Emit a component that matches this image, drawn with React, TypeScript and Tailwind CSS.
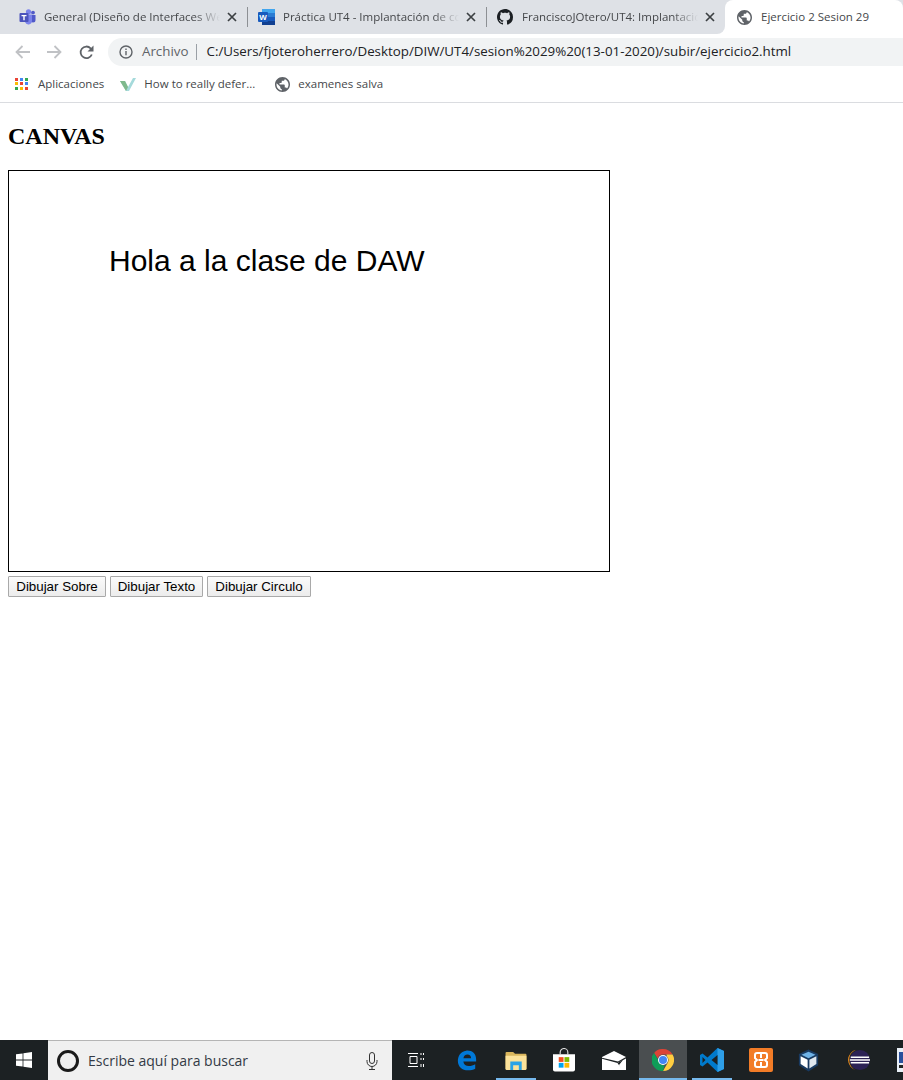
import React from "react";

const ui = "font-['Open_Sans','Noto_Sans',sans-serif]";

function Close() {
  return (
    <svg width="10" height="10" viewBox="0 0 10 10" className="shrink-0">
      <path d="M1 1l8 8M9 1l-8 8" stroke="#3c4043" strokeWidth="1.7" />
    </svg>
  );
}

function Globe({ size = 15 }: { size?: number }) {
  return (
    <svg width={size} height={size} viewBox="2 2 20 20" className="shrink-0" fill="#5f6368">
      <path d="M12 2C6.480 2 2 6.480 2 12s4.480 10 10 10 10-4.480 10-10S17.520 2 12 2zm-1 17.930c-3.950-.490-7-3.850-7-7.930 0-.620.080-1.210.210-1.790L9 15v1c0 1.100.900 2 2 2v1.930zm6.900-2.540c-.260-.810-1-1.390-1.900-1.390h-1v-3c0-.550-.450-1-1-1H8v-2h2c.550 0 1-.450 1-1V7h2c1.100 0 2-.900 2-2v-.410c2.930 1.190 5 4.060 5 7.410 0 2.080-.800 3.970-2.100 5.390z" />
    </svg>
  );
}

function Teams() {
  return (
    <svg width="17" height="16" viewBox="0 0 17 16" className="shrink-0">
      <circle cx="9.5" cy="2.8" r="2.6" fill="#7b83eb" />
      <circle cx="14" cy="3.6" r="1.9" fill="#5059c9" />
      <path d="M11 6h5.500v5a2.500 2.500 0 0 1-5 0z" fill="#5059c9" />
      <path d="M5 5.500h8V12a3.600 3.600 0 0 1-7 1z" fill="#7b83eb" />
      <rect x="0.500" y="4" width="9" height="9" rx="1" fill="#4b53bc" />
      <path d="M2.500 6h5v1.200H5.700v4H4.300v-4H2.500z" fill="#fff" />
    </svg>
  );
}

function Word() {
  return (
    <svg width="17" height="16" viewBox="0 0 17 16" className="shrink-0">
      <rect x="4" y="0" width="13" height="16" rx="1" fill="#2b7cd3" />
      <rect x="4" y="0" width="13" height="4" fill="#41a5ee" />
      <rect x="4" y="8" width="13" height="4" fill="#185abd" />
      <rect x="4" y="12" width="13" height="4" fill="#103f91" />
      <rect x="0" y="3" width="10" height="10" rx="1" fill="#185abd" />
      <text x="5" y="11" fontSize="8" fontWeight="700" fill="#fff" textAnchor="middle" fontFamily="Liberation Sans">W</text>
    </svg>
  );
}

function GitHub() {
  return (
    <svg width="16" height="16" viewBox="0 0 16 16" className="shrink-0" fill="#1b1f23">
      <path d="M8 0C3.580 0 0 3.580 0 8c0 3.540 2.290 6.530 5.470 7.590.400.070.550-.170.550-.380 0-.190-.010-.820-.010-1.490-2.010.370-2.530-.490-2.690-.940-.090-.230-.480-.940-.820-1.130-.280-.150-.680-.520-.010-.530.630-.010 1.080.580 1.230.820.720 1.210 1.870.870 2.330.660.070-.520.280-.870.510-1.070-1.780-.200-3.640-.890-3.640-3.950 0-.870.310-1.590.820-2.150-.080-.200-.360-1.020.080-2.120 0 0 .670-.210 2.200.820.640-.180 1.320-.270 2-.270s1.360.090 2 .270c1.530-1.040 2.200-.820 2.200-.820.440 1.100.160 1.920.080 2.120.510.560.820 1.270.820 2.150 0 3.070-1.870 3.750-3.650 3.950.290.250.540.730.540 1.480 0 1.070-.010 1.930-.010 2.200 0 .210.150.460.550.380A8.010 8.010 0 0 0 16 8c0-4.420-3.580-8-8-8z" />
    </svg>
  );
}

function Tab({ icon, title, divider = true }: { icon: React.ReactNode; title: string; divider?: boolean }) {
  return (
    <div className="flex h-[34px] w-[239px] shrink-0 items-center pl-[19px]">
      <div className="flex w-[25px] shrink-0 items-center">{icon}</div>
      <span className="w-[176px] shrink-0 overflow-hidden whitespace-nowrap text-[11.5px] text-[#45474a] [mask-image:linear-gradient(to_right,#000_150px,transparent_176px)]">
        {title}
      </span>
      <span className="ml-[7px] flex shrink-0"><Close /></span>
      {divider ? <span className="ml-[10px] h-[20px] w-px shrink-0 bg-[#8d9094]" /> : null}
    </div>
  );
}

function Apps() {
  const colors = ["#ea4335", "#4285f4", "#34a853", "#fbbc04", "#ea4335", "#4285f4", "#34a853", "#fbbc04", "#ea4335"];
  return (
    <span className="grid h-[13px] w-[13px] shrink-0 grid-cols-3 gap-[1.5px]">
      {colors.map((c, i) => (
        <span key={i} className="h-[3px] w-[3px]" style={{ background: c }} />
      ))}
    </span>
  );
}

function Cell({ children, active, bar, className = "" }: { children: React.ReactNode; active?: boolean; bar?: boolean; className?: string }) {
  return (
    <div className={`relative flex h-10 w-12 shrink-0 items-center justify-center ${active ? "bg-[#4a4e50]" : ""} ${className}`}>
      {children}
      {bar ? <span className={`absolute bottom-0 h-[2px] bg-[#76b9ed] ${active ? "inset-x-0" : "inset-x-[4px]"}`} /> : null}
    </div>
  );
}

function Taskbar() {
  return (
    <div className="flex h-10 w-[903px] shrink-0 items-stretch overflow-hidden bg-[#1c2123]">
      <div className="flex w-12 shrink-0 items-center justify-center">
        <svg width="16" height="16" viewBox="0 0 16 16" fill="#fff">
          <path d="M0 2.300l6.600-.900v6.200H0zM7.400 1.300L16 0v7.600H7.400zM0 8.400h6.600v6.200L0 13.700zM7.400 8.400H16V16l-8.600-1.300z" />
        </svg>
      </div>
      <div className="flex w-[344px] shrink-0 items-center border-t border-[#b5b5b5] bg-[#f0f0f0] pl-[9px] pr-[14px]">
        <span className="h-[22px] w-[22px] shrink-0 rounded-full border-[3px] border-[#1a1a1a]" />
        <span className="ml-[9px] flex-1 text-[14px] text-[#333a45]">Escribe aquí para buscar</span>
        <svg width="12" height="18" viewBox="0 0 12 18" fill="none" stroke="#333" strokeWidth="1">
          <rect x="3.500" y="0.500" width="5" height="11" rx="2.500" />
          <path d="M1 8v1.500a5 5 0 0 0 10 0V8M6 14.500v3M3 17.500h6" />
        </svg>
      </div>
      <Cell>
        <svg width="16" height="16" viewBox="0 0 16 16" fill="none" stroke="#fff" strokeWidth="1">
          <path d="M0 1.500h10M0 14.500h10M2 4.500h7v7H2zM13 1v2M13 6v2M13 12v3M15.500 1v2M15.500 6v2M15.500 12v3" />
        </svg>
      </Cell>
      <Cell className="ml-[3px]">
        <svg width="20" height="21" viewBox="0 0 21 23">
          <path d="M20.500 12.500H6.500c.300 3.200 2.800 5 6 5 2.600 0 5-.700 7-2v5c-2.200 1.200-4.800 1.800-7.800 1.800C5 22.300.500 18 .500 12 .500 6.500 3.500 1.500 9.500.700c6-.700 11 2.800 11 9.300zM15 9c0-2.500-1.500-4.200-4-4.200S6.900 6.600 6.600 9z" fill="#0078d7" fillRule="evenodd" />
        </svg>
      </Cell>
      <Cell bar className="ml-[1px]">
        <svg width="22" height="19" viewBox="0 0 22 20">
          <path d="M0 2a1 1 0 0 1 1-1h7l2 2h11a1 1 0 0 1 1 1v15H0z" fill="#d9b65c" />
          <path d="M0 5h22v14a1 1 0 0 1-1 1H1a1 1 0 0 1-1-1z" fill="#fbe29a" />
          <path d="M5 11h12v9h-3v-5H8v5H5z" fill="#2aa3e6" />
        </svg>
      </Cell>
      <Cell>
        <svg width="22" height="24" viewBox="0 0 23 24">
          <path d="M7.500 6V4a4 4 0 0 1 8 0v2" fill="none" stroke="#ddd" strokeWidth="1.200" />
          <path d="M0 6h23v16a2 2 0 0 1-2 2H2a2 2 0 0 1-2-2z" fill="#fff" />
          <rect x="6" y="9" width="5" height="5" fill="#f25022" />
          <rect x="12" y="9" width="5" height="5" fill="#7fba00" />
          <rect x="6" y="15" width="5" height="5" fill="#00a4ef" />
          <rect x="12" y="15" width="5" height="5" fill="#ffb900" />
        </svg>
      </Cell>
      <Cell className="ml-[2px]">
        <svg width="24" height="19" viewBox="0 0 24 19">
          <path d="M0 6L12 0l12 6-8 4.500L0 6.800z" fill="#fff" />
          <path d="M0 7.800l15.500 4.300L24 7.500V19H0z" fill="#fff" />
          <path d="M15.500 12.100L21 9l-4 5 2 3z" fill="#1c2123" />
        </svg>
      </Cell>
      <Cell active bar className="ml-[1px]">
        <svg width="22" height="22" viewBox="0 0 22 22">
          <path d="M11 0a11 11 0 0 1 9.530 5.500H11a5.500 5.500 0 0 0-5.300 4L2.100 3.900A11 11 0 0 1 11 0z" fill="#db4437" />
          <path d="M20.530 5.500A11 11 0 0 1 11 22l4.750-8.200A5.500 5.500 0 0 0 15 7.500l-.600-2z" fill="#ffcd40" />
          <path d="M11 22A11 11 0 0 1 2.100 3.900l4.700 8.200A5.500 5.500 0 0 0 12.500 16.300z" fill="#0f9d58" />
          <circle cx="11" cy="11" r="5" fill="#fff" />
          <circle cx="11" cy="11" r="4" fill="#4285f4" />
        </svg>
      </Cell>
      <Cell bar className="ml-[1px]">
        <svg width="24" height="24" viewBox="0 0 24 24">
          <path d="M17.500 0L24 3v18l-6.500 3-10-9.500L2.500 18.500 0 17V7l2.500-1.500 5 4z" fill="#007acc" />
          <path d="M17.500 0L24 3v18l-6.500 3z" fill="#2e9fe8" />
          <path d="M17.500 7l-6 5 6 5zM2.500 9v6l3-3z" fill="#1c2123" />
        </svg>
      </Cell>
      <Cell className="ml-[1px]">
        <svg width="24" height="24" viewBox="0 0 24 24">
          <rect width="24" height="24" rx="2" fill="#f27c27" />
          <path d="M8 5h8a2 2 0 0 1 2 2v3l-2 2 2 2v3a2 2 0 0 1-2 2H8a2 2 0 0 1-2-2v-3l2-2-2-2V7a2 2 0 0 1 2-2zM12 5v5M12 14v5M9.500 12h5" fill="none" stroke="#fff" strokeWidth="2" />
        </svg>
      </Cell>
      <Cell className="-ml-[1px]">
        <svg width="21" height="23" viewBox="0 0 24 25">
          <path d="M12 0l11 5v13l-11 7-11-7V5z" fill="#183a61" />
          <path d="M12 2.500l8 3.500-8 4-8-4z" fill="#6fb2e6" />
          <path d="M3 7.500l8 4v10l-8-5z" fill="#fff" />
          <path d="M21 7.500l-8 4v10l8-5z" fill="#dfe7ee" />
        </svg>
      </Cell>
      <Cell className="ml-[3px]">
        <svg width="24" height="22" viewBox="0 0 24 24">
          <circle cx="13" cy="12" r="11" fill="#2c2255" />
          <path d="M9 0.800A11.500 11.500 0 0 0 9 23.200 12 12 0 0 1 9 0.800z" fill="#f7941e" />
          <path d="M3 9h20M2 12h22M3 15h20" stroke="#fff" strokeWidth="1.500" />
        </svg>
      </Cell>
      <div className="ml-[14px] flex shrink-0 items-center">
        <svg width="16" height="24" viewBox="0 0 16 24">
          <rect width="16" height="24" fill="#e8eef6" />
          <rect x="2" y="4" width="14" height="11" fill="#2a4f9c" />
          <rect x="2" y="17" width="14" height="3" fill="#222" />
        </svg>
      </div>
    </div>
  );
}

export default function App() {
  return (
    <div className="flex h-[1080px] w-[903px] flex-col overflow-hidden bg-white">
      <div className={`flex h-[103px] shrink-0 flex-col border-b border-[#dadce0] ${ui}`}>
        <div className="flex h-[34px] shrink-0 overflow-hidden bg-[#dee1e6]">
          <div className="flex h-[34px] w-[725px] shrink-0 rounded-br-[8px] bg-[#dee1e6] shadow-[8px_8px_0_0_#ffffff]">
            <Tab icon={<Teams />} title="General (Diseño de Interfaces Web)" />
            <Tab icon={<Word />} title="Práctica UT4 - Implantación de contenido" />
            <Tab icon={<GitHub />} title="FranciscoJOtero/UT4: Implantación de" divider={false} />
          </div>
          <div className="flex h-[34px] flex-1 items-center rounded-t-[8px] bg-white pl-[12px]">
            <Globe />
            <span className="ml-[9px] whitespace-nowrap text-[11.5px] text-[#45474a]">Ejercicio 2 Sesion 29</span>
          </div>
        </div>
        <div className="flex h-[34px] shrink-0 items-center bg-white pl-[15px] pt-[2px]">
          <svg width="15" height="14" viewBox="0 0 15 14" fill="none" stroke="#c0c2c5" strokeWidth="1.800">
            <path d="M15 7H2M7.500 1L1.500 7l6 6" />
          </svg>
          <svg width="15" height="14" viewBox="0 0 15 14" fill="none" stroke="#c0c2c5" strokeWidth="1.800" className="ml-[17px]">
            <path d="M0 7H13M7.500 1l6 6-6 6" />
          </svg>
          <svg width="15" height="15" viewBox="0 0 15 15" fill="none" className="ml-[17px]">
            <path d="M12.800 9.500A5.800 5.800 0 1 1 11.600 3.300L13.500 5" stroke="#5f6368" strokeWidth="1.800" />
            <path d="M14.500 0.500V6.500H8.500z" fill="#5f6368" />
          </svg>
          <div className="ml-[14px] flex h-[28px] flex-1 items-center rounded-l-[14px] bg-[#f1f3f4] pl-[11px]">
            <svg width="14" height="14" viewBox="0 0 14 14" fill="none" stroke="#5f6368" strokeWidth="1.400">
              <circle cx="7" cy="7" r="6" />
              <path d="M7 6v4.200M7 3.500v1.500" />
            </svg>
            <span className="ml-[9px] text-[13.33px] text-[#5f6368]">Archivo</span>
            <span className="ml-[8px] h-[16px] w-px bg-[#9aa0a6]" />
            <span className="ml-[9px] whitespace-nowrap text-[13.33px] text-[#202124]">C:/Users/fjoteroherrero/Desktop/DIW/UT4/sesion%2029%20(13-01-2020)/subir/ejercicio2.html</span>
          </div>
        </div>
        <div className="flex h-[34px] shrink-0 items-center bg-white pb-[2px] pl-[15px] text-[11.5px] text-[#45474a]">
          <Apps />
          <span className="ml-[10px]">Aplicaciones</span>
          <svg width="16" height="13" viewBox="0 0 16 13" className="ml-[16px]">
            <path d="M0 3h5l3 6 5-9h3L9 13H6z" fill="#a5dadb" />
            <path d="M0 3h5l3 6-2 4z" fill="#7fb98c" />
          </svg>
          <span className="ml-[8px]">How to really defer...</span>
          <span className="ml-[20px] flex"><Globe /></span>
          <span className="ml-[8px]">examenes salva</span>
        </div>
      </div>

      <main className="flex-1 px-[8px] font-['Liberation_Serif',serif]">
        <h2 className="mt-[20px] text-[24px] font-bold leading-[27px] text-black">CANVAS</h2>
        <div className="mt-[20px] h-[402px] w-[602px] border border-black pl-[100px] pt-[73px] font-['Liberation_Sans',sans-serif]">
          <span className="text-[30px] leading-[34px] text-black">Hola a la clase de DAW</span>
        </div>
        <div className="mt-[4px] flex gap-[4px] font-['Liberation_Sans',sans-serif]">
          <button className="h-[21px] w-[98px] rounded-[1px] border border-[#a9a9a9] bg-linear-to-b from-[#fbfbfb] to-[#ececec] text-[13.333px] leading-[15px] text-black">Dibujar Sobre</button>
          <button className="h-[21px] w-[93px] rounded-[1px] border border-[#a9a9a9] bg-linear-to-b from-[#fbfbfb] to-[#ececec] text-[13.333px] leading-[15px] text-black">Dibujar Texto</button>
          <button className="h-[21px] w-[104px] rounded-[1px] border border-[#a9a9a9] bg-linear-to-b from-[#fbfbfb] to-[#ececec] text-[13.333px] leading-[15px] text-black">Dibujar Circulo</button>
        </div>
      </main>

      <div className={ui}>
        <Taskbar />
      </div>
    </div>
  );
}
